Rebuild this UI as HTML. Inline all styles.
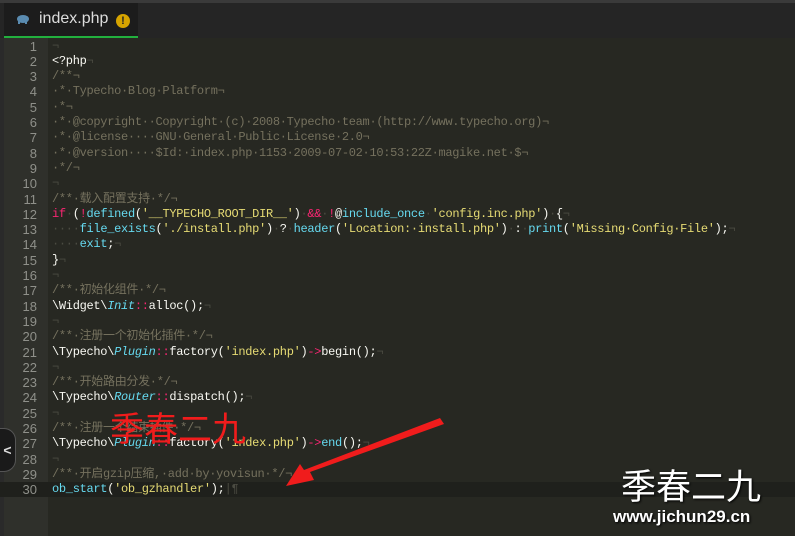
<!DOCTYPE html><html><head><meta charset="utf-8"><style>
body{margin:0;width:795px;height:536px;overflow:hidden;background:#272822;position:relative;font-family:"Liberation Mono","Noto Sans CJK SC",monospace}
#top{position:absolute;left:0;top:0;width:795px;height:3px;background:#3a3a3a}
#bar{position:absolute;left:0;top:3px;width:795px;height:35px;background:#252525}
#tab{position:absolute;left:4px;top:3px;width:134px;height:33px;background:#1c1c1c;border-bottom:2px solid #22b03e}
#tab span{position:absolute;left:35px;top:7px;color:#ddd;font:16px "Liberation Sans",sans-serif}
#warn{position:absolute;left:112px;top:11px;width:14px;height:14px;border-radius:50%;background:#d6a400;color:#222;font:bold 11px "Liberation Sans";text-align:center;line-height:14px}
#gut{position:absolute;left:4px;top:38px;width:44px;height:498px;background:#2f302b}
#lb{position:absolute;left:0;top:38px;width:4px;height:498px;background:#2a2a2a}
.l{position:absolute;left:0;width:795px;height:15.3px;font-size:12px;letter-spacing:-0.3px;line-height:15.3px;white-space:pre;color:#f8f8f2}
.n{position:absolute;left:4px;width:33px;text-align:right;color:#8f908a;font-family:"Liberation Sans";font-size:13px;letter-spacing:0}
.t{position:absolute;left:52px}
.c{color:#75715e}.k{color:#f92672}.f{color:#66d9ef}.s{color:#e6db74}.i{color:#66d9ef;font-style:italic}.d{color:#4b4b42}
</style></head><body>
<div id="top"></div><div id="bar"></div>
<div id="tab"><svg style="position:absolute;left:12px;top:11px" width="14" height="11"><ellipse cx="7" cy="5" rx="6" ry="4" fill="#5a8bb0"/><rect x="2" y="6" width="2" height="4" fill="#5a8bb0"/><rect x="9" y="6" width="2" height="4" fill="#5a8bb0"/></svg><span>index.php</span><div id="warn">!</div></div>
<div id="lb"></div><div id="gut"></div>
<div style="position:absolute;left:0;top:482px;width:795px;height:15px;background:#1f201c"></div>
<div id="code"></div>
<script>
var L=[
'<span class="d">¬</span>',
'&lt;?php<span class="d">¬</span>',
'<span class="c">/**¬</span>',
'<span class="c">·*·Typecho·Blog·Platform¬</span>',
'<span class="c">·*¬</span>',
'<span class="c">·*·@copyright··Copyright·(c)·2008·Typecho·team·(http://www.typecho.org)¬</span>',
'<span class="c">·*·@license····GNU·General·Public·License·2.0¬</span>',
'<span class="c">·*·@version····$Id:·index.php·1153·2009-07-02·10:53:22Z·magike.net·$¬</span>',
'<span class="c">·*/¬</span>',
'<span class="d">¬</span>',
'<span class="c">/**·载入配置支持·*/¬</span>',
'<span class="k">if</span><span class="d">·</span>(<span class="k">!</span><span class="f">defined</span>(<span class="s">\'__TYPECHO_ROOT_DIR__\'</span>)<span class="d">·</span><span class="k">&amp;&amp;</span><span class="d">·</span><span class="k">!</span>@<span class="f">include_once</span><span class="d">·</span><span class="s">\'config.inc.php\'</span>)<span class="d">·</span>{<span class="d">¬</span>',
'<span class="d">····</span><span class="f">file_exists</span>(<span class="s">\'./install.php\'</span>)<span class="d">·</span>?<span class="d">·</span><span class="f">header</span>(<span class="s">\'Location:·install.php\'</span>)<span class="d">·</span>:<span class="d">·</span><span class="f">print</span>(<span class="s">\'Missing·Config·File\'</span>);<span class="d">¬</span>',
'<span class="d">····</span><span class="f">exit</span>;<span class="d">¬</span>',
'}<span class="d">¬</span>',
'<span class="d">¬</span>',
'<span class="c">/**·初始化组件·*/¬</span>',
'\\Widget\\<span class="i">Init</span><span class="k">::</span>alloc();<span class="d">¬</span>',
'<span class="d">¬</span>',
'<span class="c">/**·注册一个初始化插件·*/¬</span>',
'\\Typecho\\<span class="i">Plugin</span><span class="k">::</span>factory(<span class="s">\'index.php\'</span>)<span class="k">-&gt;</span>begin();<span class="d">¬</span>',
'<span class="d">¬</span>',
'<span class="c">/**·开始路由分发·*/¬</span>',
'\\Typecho\\<span class="i">Router</span><span class="k">::</span>dispatch();<span class="d">¬</span>',
'<span class="d">¬</span>',
'<span class="c">/**·注册一个结束插件·*/¬</span>',
'\\Typecho\\<span class="i">Plugin</span><span class="k">::</span>factory(<span class="s">\'index.php\'</span>)<span class="k">-&gt;</span><span class="f">end</span>();<span class="d">¬</span>',
'<span class="d">¬</span>',
'<span class="c">/**·开启gzip压缩,·add·by·yovisun·*/¬</span>',
'<span class="f">ob_start</span>(<span class="s">\'ob_gzhandler\'</span>);<span class="d">|¶</span>'];
var h='';for(var i=0;i<L.length;i++){h+='<div class="l" style="top:'+(38.5+i*15.3)+'px"><span class="n">'+(i+1)+'</span><span class="t">'+L[i]+'</span></div>';}
document.getElementById('code').innerHTML=h;
</script>
<div style="position:absolute;left:0;top:428px;width:15px;height:42px;background:#1a1a1a;border:1px solid #555;border-left:none;border-radius:0 12px 12px 0;color:#ddd;font:bold 14px 'Liberation Sans';line-height:42px;text-align:center">&lt;</div>
<div style="position:absolute;left:110px;top:402px;color:#f01c1c;font:34px 'Noto Sans CJK SC',sans-serif;line-height:50px">季春二九</div>
<svg style="position:absolute;left:0;top:0" width="795" height="536"><polygon points="440,418 444,424 310,472 314,480 286,486 300,464 304,470" fill="#f01c1c"/></svg>
<div style="position:absolute;left:621px;top:462px;color:#fff;font:35px 'Noto Sans CJK SC',sans-serif;line-height:46px;text-shadow:1px 1px 2px #000">季春二九</div>
<div style="position:absolute;left:613px;top:507px;color:#fff;font:bold 17px 'Liberation Sans',sans-serif;text-shadow:1px 1px 2px #000">www.jichun29.cn</div>
</body></html>
